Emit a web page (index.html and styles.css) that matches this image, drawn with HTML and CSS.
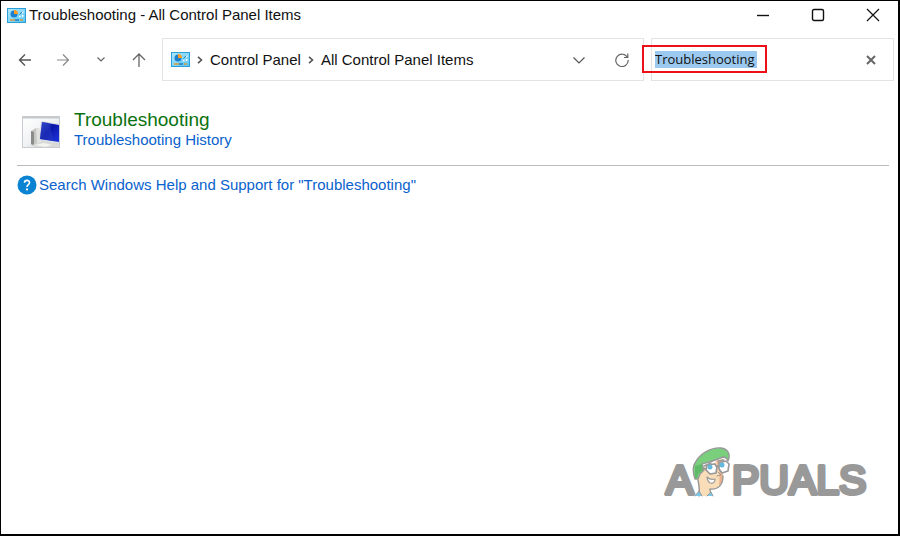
FILE: index.html
```html
<!DOCTYPE html>
<html lang="en">
<head>
<meta charset="utf-8">
<title>Troubleshooting - All Control Panel Items</title>
<link rel="stylesheet" href="styles.css">
</head>
<body>
<svg class="defs" aria-hidden="true">
  <defs>
    <linearGradient id="panel" x1="0" y1="0" x2="1" y2="1"><stop stop-color="#b3e8ff"/><stop offset="1" stop-color="#54c4f5"/></linearGradient>
    <linearGradient id="screen" x1="0" y1="0" x2="1" y2="1"><stop stop-color="#4258d4"/><stop offset=".45" stop-color="#0b16a8"/><stop offset="1" stop-color="#1d36e0"/></linearGradient>
    <linearGradient id="frame" x1="0" y1="0" x2="1" y2="1"><stop stop-color="#ffffff"/><stop offset=".5" stop-color="#f1f2f4"/><stop offset="1" stop-color="#b9bec4"/></linearGradient>
    <symbol id="control-panel" viewBox="0 0 19 15">
      <rect x=".5" y=".5" width="18" height="14" fill="url(#panel)" stroke="#2d9fd8"/>
      <circle cx="7" cy="6" r="3.500" fill="#1d80cc"/>
      <path d="M7 6V2a4 4 0 0 1 4 4z" fill="#ff9d1e"/>
      <path d="M12 8.500h1.500M15 3l1 1-1 1M15 7l1 1-1 1" fill="none" stroke="#fff" stroke-width="1.300"/>
      <path d="M12.500 6.500l3-3" stroke="#2b7fba"/>
      <path d="M3 12h5M13 12h3" stroke="#dd9b3a" stroke-width="1.500"/>
      <path d="M8 12h4" stroke="#247bb6" stroke-width="1.500"/>
    </symbol>
  </defs>
</svg>
<div class="window">
  <header class="titlebar">
    <svg class="cp-icon"><use href="#control-panel"/></svg>
    <h1 class="title">Troubleshooting - All Control Panel Items</h1>
    <div class="caption-buttons">
      <button type="button" aria-label="Minimize"><svg width="14" height="14" viewBox="0 0 14 14"><path d="M1 7.500h12" stroke="#111" stroke-width="1.400"/></svg></button>
      <button type="button" aria-label="Maximize"><svg width="14" height="14" viewBox="0 0 14 14"><rect x="1.500" y="1.500" width="11" height="11" rx="1.500" fill="none" stroke="#111" stroke-width="1.400"/></svg></button>
      <button type="button" aria-label="Close"><svg width="14" height="14" viewBox="0 0 14 14"><path d="M1 1l12 12M13 1L1 13" stroke="#111" stroke-width="1.200"/></svg></button>
    </div>
  </header>
  <nav class="toolbar" aria-label="Navigation">
    <div class="history">
      <button type="button" aria-label="Back"><svg width="14" height="14" viewBox="0 0 14 14"><path d="M13 7H1.500M7 1.500L1.500 7L7 12.500" fill="none" stroke="#555" stroke-width="1.400"/></svg></button>
      <button type="button" aria-label="Forward"><svg width="14" height="14" viewBox="0 0 14 14"><path d="M1 7h11.500M7 1.500L12.500 7L7 12.500" fill="none" stroke="#888" stroke-width="1.200"/></svg></button>
      <button type="button" aria-label="Recent locations"><svg width="14" height="14" viewBox="0 0 14 14"><path d="M3.500 4.500L7 8l3.500-3.500" fill="none" stroke="#666" stroke-width="1.200"/></svg></button>
      <button type="button" aria-label="Up"><svg width="14" height="14" viewBox="0 0 14 14"><path d="M7 14V1M1 7l6-6l6 6" fill="none" stroke="#666" stroke-width="1.300"/></svg></button>
    </div>
    <div class="address">
      <svg class="cp-icon"><use href="#control-panel"/></svg>
      <svg class="separator" width="6" height="8" viewBox="0 0 6 8"><path d="M1 .8L4.500 4L1 7.200" fill="none" stroke="#555" stroke-width="1.600"/></svg>
      <a href="#">Control Panel</a>
      <svg class="separator" width="6" height="8" viewBox="0 0 6 8"><path d="M1 .8L4.500 4L1 7.200" fill="none" stroke="#555" stroke-width="1.600"/></svg>
      <a href="#">All Control Panel Items</a>
      <div class="address-actions">
        <button type="button" aria-label="Previous locations"><svg width="14" height="14" viewBox="0 0 14 14"><path d="M1.500 4.500L7 10l5.500-5.500" fill="none" stroke="#555" stroke-width="1.200"/></svg></button>
        <button type="button" aria-label="Refresh"><svg width="14" height="14" viewBox="0 0 14 14"><path d="M12.500 4.500A6.200 6.200 0 1 0 13.200 7M12.800 .5v4H9" fill="none" stroke="#666" stroke-width="1.200"/></svg></button>
      </div>
    </div>
    <div class="search">
      <input class="search-input" type="text" value="Troubleshooting" aria-label="Search Control Panel">
      <button type="button" aria-label="Clear search"><svg width="10" height="10" viewBox="0 0 10 10"><path d="M1 1l8 8M9 1L1 9" stroke="#666" stroke-width="2"/></svg></button>
      <span class="callout"></span>
    </div>
  </nav>
  <main class="content">
    <section class="result">
      <svg class="result-icon" viewBox="0 0 38 32">
        <rect x=".5" y=".5" width="37" height="31" fill="url(#frame)" stroke="#c9ccd0"/>
        <path d="M1 1.500h36" stroke="#c6c9cc" stroke-width="2"/>
        <path d="M9 15l5-3 4 1v14l-6 3-3-2z" fill="#c5c6c3"/>
        <path d="M9 15l3 1v14l-3-2z" fill="#898b88"/>
        <path d="M14 12l4 1v14l-3 1z" fill="#e1e2df"/>
        <path d="M10 29l11-4 16 3v3H14z" fill="#d9dad7"/>
        <path d="M13 29l9-2 8 2-7 2z" fill="#f3f3ef"/>
        <path d="M19 5l18 3v20l-20-4z" fill="#d9dde4"/>
        <path d="M20 6l17 3v17l-19-3z" fill="url(#screen)"/>
        <path d="M20 6l7 1 5 18-14-2z" fill="#273abd" opacity=".55"/>
      </svg>
      <div>
        <h2 class="result-title"><a href="#">Troubleshooting</a></h2>
        <a class="link" href="#">Troubleshooting History</a>
      </div>
    </section>
    <a class="link help" href="#">
      <svg width="20" height="20" viewBox="0 0 20 20"><circle cx="10" cy="10" r="9.500" fill="#0a83d2"/><path d="M7.500 7.800C7.500 4.500 12.500 4.600 12.500 7.600C12.500 9.600 10 9.600 10 12" fill="none" stroke="#fff" stroke-width="1.600"/><circle cx="10" cy="14.400" r="1.100" fill="#fff"/></svg>
      <span>Search Windows Help and Support for "Troubleshooting"</span>
    </a>
  </main>
  <footer class="brand">
    <svg class="logo" viewBox="0 0 208 54" role="img" aria-label="Appuals">
      <g class="logo-text"><text x="2" y="48">A</text><text x="68" y="48">PUALS</text></g>
      <g stroke="#999" stroke-width="1.400" stroke-linejoin="round" stroke-linecap="round">
        <path d="M34 50C35 44 34 38 34 34C30 32 29 28 34 27L40 21L59 13C61 20 58 26 59 32C58 39 54 44 46 43L47 50z" fill="#f9dcb8" stroke="none"/>
        <path d="M52 15L59 13C61 20 58 26 59 32C58 36 57 38 55 40C56 31 56 23 52 15z" fill="#edb08a" stroke="none"/>
        <path d="M35 50C36 44 35 39 34 34M59 30C59 38 55 44 46 43L47 49" fill="none"/>
        <path d="M31 33C29 27 28 21 31 17C36 7 48 1 57 2C64 3 67 8 64 15C63 12 61 11 59 11C53 14 45 16 38 18L40 24L36 28L34 33z" fill="#79cf7c"/>
        <path d="M31 20l7-2 1 6-5 4-1 4h-2z" fill="#60bb69" stroke="none"/>
        <path d="M40 20l7-3M54 15l6-1" fill="none"/>
        <path d="M43 19l8-1 2 3-1 6-6 1-4-4zM55 17l7-2 3 3-1 7-6 2-3-4z" fill="#fff" stroke-width="1.700"/>
        <path d="M38 22l4 1M52 20h3" fill="none"/>
        <circle cx="46" cy="21" r="2.500" fill="#64b8de" stroke="none"/><circle cx="58" cy="19" r="2.500" fill="#64b8de" stroke="none"/>
        <path d="M54 26l3 3-4 1" fill="none" stroke-width="1"/>
        <path d="M43 31c2 2 5 3 8 2 0 6-7 6-8-2z" fill="#fff" stroke-width="1.200"/>
        <path d="M31 50l4-5 3 5M43 50l4-4 2 4" fill="#78c9ea" stroke-width="1"/>
      </g>
    </svg>
  </footer>
</div>
</body>
</html>
```
FILE: styles.css
```css
* { box-sizing: border-box; }
body { margin: 0; background: #fff; color: #111; font: 15px/20px "Liberation Sans", Arial, sans-serif; }
h1, h2 { margin: 0; font-weight: 400; }
a { color: inherit; text-decoration: none; }
svg { display: block; flex: none; }
button { display: flex; flex: none; align-items: center; justify-content: center; padding: 0; border: 0; background: transparent; }
.defs { position: absolute; width: 0; height: 0; }
.window { display: flex; flex-direction: column; min-height: 100vh; border: 1px solid #000; border-right-width: 2px; border-bottom-width: 2px; }
.cp-icon { width: 19px; height: 15px; }
.titlebar { display: flex; align-items: center; height: 28px; padding-left: 6px; }
.title { flex: 1; margin-left: 3px; font-size: 15px; white-space: nowrap; }
.caption-buttons { display: flex; gap: 5px; }
.caption-buttons button { width: 50px; height: 28px; }
.toolbar { display: flex; align-items: center; margin-top: 9px; padding-right: 4px; }
.history { display: flex; flex: none; margin-right: 4px; padding-left: 5px; }
.history button { width: 38px; height: 42px; }
.address { display: flex; align-items: center; flex: 1; height: 43px; padding-left: 8px; border: 1px solid #e3e3e3; white-space: nowrap; }
.separator { margin: 0 7px; }
.address-actions { display: flex; margin-left: auto; }
.address-actions button { width: 43px; height: 40px; }
.search { position: relative; display: flex; align-items: center; justify-content: space-between; flex: none; width: 243px; height: 43px; margin-left: 7px; padding-left: 3px; border: 1px solid #e3e3e3; }
.search-input { width: 102px; height: 17px; padding: 0; border: 0; outline: 0; background: #9bc9ef; color: #111; font: 13px/17px "Open Sans", "Noto Sans", sans-serif; }
.search button { width: 44px; height: 40px; }
.callout { position: absolute; top: 6px; left: -10px; width: 125px; height: 28px; border: 2px solid #ed1016; pointer-events: none; }
.content { flex: 1; padding: 28px 9px 0 16px; }
.result { display: flex; gap: 14px; padding: 0 0 15px 5px; border-bottom: 1px solid #bbb; }
.result-icon { width: 38px; height: 32px; margin-top: 7px; }
.result-title { font-size: 19px; line-height: 21px; color: #0a720f; }
.link { color: #0a62cc; }
.help { display: flex; width: fit-content; gap: 2px; margin-top: 9px; }
.brand { display: flex; justify-content: flex-end; padding: 0 26px 34px 0; }
.logo { width: 208px; height: 54px; overflow: visible; }
.logo-text { fill: #999; stroke: #999; stroke-width: 4px; stroke-linejoin: round; font: 400 41px "Liberation Sans", Arial, sans-serif; font-kerning: none; }
```
